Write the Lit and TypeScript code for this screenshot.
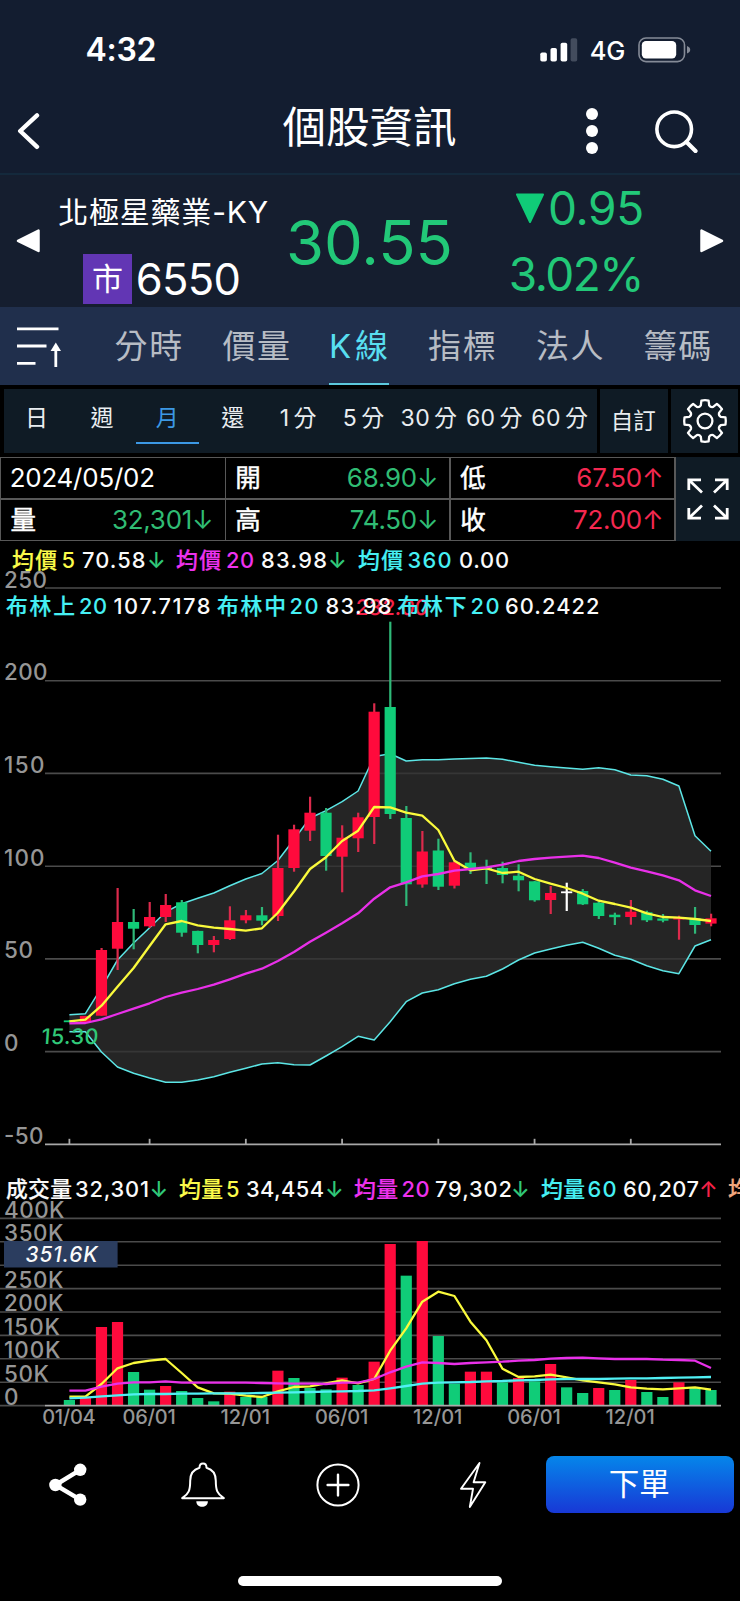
import { LitElement, html, svg, css } from "lit";
import { customElement } from "lit/decorators.js";

const PITCH = 16.04;
const FIRST_X = 69.4;
const cx = (i: number) => FIRST_X + i * PITCH;

/** direction, body top, body bottom, wick top, wick bottom */
type Candle = ["r" | "g" | "w", number, number, number, number];

const CANDLES: Candle[] = [
  ["g", 1020.4, 1022.2, 1020.4, 1022.2], ["r", 1016, 1022, 1016, 1022], ["r", 950, 1015.7, 948, 1015.7],
  ["r", 922, 948.7, 888, 970], ["g", 922, 928.7, 909, 949.3], ["r", 917, 926.3, 902, 928],
  ["r", 905, 917, 894, 922], ["g", 902.3, 932.7, 900, 936.7], ["g", 930.9, 945, 930.7, 953.3],
  ["r", 940, 945, 936, 952.3], ["r", 920.3, 939, 906.3, 940], ["r", 915.3, 920.3, 910, 923.3],
  ["g", 915.3, 920.7, 907, 925.3], ["r", 868, 916, 834.7, 921], ["r", 829.3, 868, 824.7, 871.7],
  ["r", 812.7, 830.7, 796.7, 841], ["g", 812.7, 856, 808, 870.7], ["r", 837.7, 856.7, 825.3, 892.3],
  ["r", 817.3, 838.3, 812.7, 852], ["r", 711.7, 817, 703.3, 844], ["g", 707, 814, 621.7, 819],
  ["g", 818, 884.3, 806, 906], ["r", 851.5, 884.5, 831, 887.7], ["g", 850.5, 886.7, 838.7, 890],
  ["r", 862.3, 885.7, 861, 888.5], ["g", 862.7, 868, 852.3, 874], ["g", 867, 869.4, 859.7, 884],
  ["g", 868, 875, 861.7, 883.3], ["g", 875.7, 880.3, 864.3, 891.3], ["g", 881.3, 900.3, 881, 901.7],
  ["r", 893, 900, 886, 914], ["w", 891.4, 893.2, 882.7, 911], ["g", 891, 904.3, 889, 905],
  ["g", 902.7, 916, 901.3, 919], ["g", 914.7, 917.2, 912.7, 925], ["r", 911.7, 917, 900, 924.7],
  ["g", 912.3, 920.3, 910.7, 922], ["g", 918.5, 920.7, 914, 922.3], ["r", 917, 919.5, 915.7, 939.7],
  ["g", 918.3, 925, 907, 933.7], ["r", 918.3, 923.6, 913.7, 926.3],
];

const BAND_TOP = [1014.7, 1013.7, 987.7, 960, 943, 927.7, 912, 903.7, 898.3, 893, 885.7, 879, 873.5, 860.5, 839.5, 818,
  810.7, 801.7, 791, 756.5, 753.7, 761, 759.7, 759.7, 759, 758.5, 758, 759.3, 762.3, 765.3, 766.7, 768, 769.3, 767.7,
  769.7, 775, 775.7, 779.3, 786, 835.7, 851.3];
const BAND_LOW = [1031.7, 1031.7, 1052, 1067, 1073.3, 1078, 1082.3, 1082.3, 1080, 1076.7, 1072.3, 1068.3, 1064, 1062.7,
  1064.7, 1065, 1056, 1046.7, 1036.3, 1040, 1021.7, 1001.7, 993, 989.7, 983.7, 979.3, 976.3, 969, 960, 953, 949, 945.3,
  942.3, 948.3, 955.3, 959.3, 965.7, 970.7, 973.7, 946, 939.7];
const MA5 = [1021.3, 1019.7, 1005.7, 986.7, 968, 946, 924.3, 921, 925.3, 927.7, 929, 930.7, 928.3, 912.7, 891.5, 869,
  857.3, 841, 830.7, 807, 807.3, 812.7, 815.7, 830, 860.7, 870.3, 868.3, 873, 871.7, 879, 883.7, 888, 893.7, 900.7,
  904, 907.7, 913.3, 917, 917.7, 919, 921];
const MA20 = [1023.3, 1023, 1019.3, 1014, 1008.7, 1003.3, 997, 992.7, 989, 984.7, 979.3, 973.7, 968.7, 961, 952, 941.7,
  932.7, 923.3, 913.3, 898.7, 887.3, 882.3, 876.3, 874, 870.7, 869, 867.3, 864.7, 861, 859, 857.7, 856.7, 855.7, 858,
  862.7, 867.7, 871.3, 875.3, 880.3, 890.3, 896];

/** Volume pane values are thirds of a pixel below y = 1160. */
const vy = (v: number) => 1160 + v / 3;
const VOLUMES = [720, 712, 501, 486, 636, 689, 678, 693, 714, 724, 695, 711, 711, 632, 654, 684, 688, 653, 675, 605, 252,
  347, 243, 528, 671, 635, 635, 667, 654, 664, 612, 682, 699, 684, 690, 660, 696, 711, 667, 683, 690];
const VOLUME_DIR = "grrrggrgggrggrgggrgrrgrggrrgrgrggrgrggrgg";
const VMA5 = [710, 710, 672, 625, 609, 602, 597, 639, 682, 700, 701, 707, 711, 694, 681, 679, 670, 661, 670, 657, 572,
  505, 425, 395, 408, 485, 541, 626, 651, 649, 644, 652, 661, 667, 673, 682, 686, 688, 685, 682, 689];
const VMA20 = [692, 692, 680, 671, 667, 667, 664, 668, 668, 668, 668, 668, 669, 670, 671, 671, 672, 668, 668, 657, 637,
  620, 607, 609, 612, 609, 607, 605, 602, 600, 596, 594, 593, 595, 597, 597, 597, 599, 600, 602, 624];
const VMA60 = [715, 713, 709, 706, 703, 702, 702, 701, 701, 700, 700, 700, 699, 698, 697, 696, 695, 694, 693, 691, 685,
  678, 671, 668, 667, 666, 664, 663, 661, 660, 658, 657, 657, 657, 656, 655, 655, 654, 653, 652, 651];

const points = (ys: number[]) => ys.map((y, i) => `${cx(i).toFixed(1)},${y.toFixed(1)}`).join(" ");

/** x, width, text, colour class */
type Run = [number, number, string, string];

const PRICE_LEGEND: Run[] = [
  [12, 45, "均價", "yellow"], [61.5, 14, "5", "yellow"], [82, 63.5, "70.58", "white"], [147, 17, "↓", "green"],
  [176, 45, "均價", "magenta"], [226, 28, "20", "magenta"], [261, 66, "83.98", "white"], [328, 17, "↓", "green"],
  [358, 45, "均價", "cyan"], [407.5, 44, "360", "cyan"], [459, 50, "0.00", "white"],
];
const BAND_LEGEND: Run[] = [
  [6, 69, "布林上", "cyan"], [79, 28, "20", "cyan"], [113.5, 97, "107.7178", "white"],
  [217, 69, "布林中", "cyan"], [289.5, 29, "20", "cyan"], [325.5, 66, "83.98", "white"],
  [397.5, 69, "布林下", "cyan"], [470.5, 29, "20", "cyan"], [505, 94.5, "60.2422", "white"],
];
const VOLUME_LEGEND: Run[] = [
  [6, 66, "成交量", "white"], [75, 74, "32,301", "white"], [149.5, 17, "↓", "green"],
  [179, 44, "均量", "yellow"], [226, 14, "5", "yellow"], [246, 78, "34,454", "white"], [325, 17, "↓", "green"],
  [354, 44, "均量", "magenta"], [401.5, 28, "20", "magenta"], [435, 77, "79,302", "white"], [511, 17, "↓", "green"],
  [541, 44, "均量", "cyan"], [587.5, 29, "60", "cyan"], [623, 76, "60,207", "white"], [699, 17, "↑", "red"],
  [728, 44, "均量", "orange"],
];

const isHan = (text: string) => /[\u4e00-\u9fff]/.test(text);

const runs = (list: Run[], y: number) =>
  list.map(([x, w, text, tone]) => svg`
    <text class="legend ${tone} ${isHan(text) ? "han" : ""}" x=${x} y=${y} textLength=${w}>${text}</text>`);

@customElement("stock-chart")
export class StockChart extends LitElement {
  static styles = css`
    :host { display: block; }
    svg { display: block; }
    text { font-family: Inter, "Noto Sans CJK TC", sans-serif; }
    .legend { font-size: 21.8px; font-weight: 500; }
    .han { stroke-width: 0.2; }
    .han.yellow { stroke: #fbfb4a; }
    .han.magenta { stroke: #ee32ee; }
    .han.cyan { stroke: #46f0f4; }
    .han.white { stroke: #fafafa; }
    .han.orange { stroke: #f2a67c; }
    .axis { font-size: 22.4px; font-weight: 500; fill: #969696; }
    .date { font-size: 20px; font-weight: 500; fill: #969696; }
    .mark { font-size: 21.5px; font-weight: 500; }
    .tag { font-size: 20.8px; font-weight: 550; font-style: italic; }
    .tag-box { fill: #2b3d5f; }
    .yellow { fill: #fbfb4a; }
    .magenta { fill: #ee32ee; }
    .cyan { fill: #46f0f4; }
    .green { fill: #30c878; }
    .red { fill: #f62248; }
    .white { fill: #fafafa; }
    .orange { fill: #f2a67c; }
    .grid { stroke: #4b4b4b; stroke-width: 1.6; }
    .base { stroke: #a8a8a8; stroke-width: 1.8; }
    .band { fill: #303030; fill-opacity: 0.77; }
    .line { fill: none; stroke-width: 2.3; stroke-linejoin: round; }
    .line.l-band { stroke: #5ce6e6; stroke-width: 1.5; }
    .l-yellow { stroke: #fafa3c; }
    .l-magenta { stroke: #e930e9; }
    .l-cyan { stroke: #50f0f4; }
    .c-r { fill: #ff0a3c; }
    .c-g { fill: #10cc78; }
    .c-w { fill: #ffffff; }
    .k-r { fill: #dc2a4c; }
    .k-g { fill: #2fb878; }
    .k-w { fill: #ffffff; }
  `;

  private label(w: number, y: number, text: string) {
    return svg`<text class="axis" x="4" y=${y} textLength=${w}>${text}</text>`;
  }

  render() {
    const priceGrid = [588, 680.8, 773.4, 866.2, 958.9, 1051.6];
    const volumeGrid = [0, 1, 2, 3, 4, 5, 6, 7].map((i) => 1218.4 + i * 23.4);
    const ticks = [0, 5, 11, 17, 23, 29, 35];
    const dates = ["01/04", "06/01", "12/01", "06/01", "12/01", "06/01", "12/01"];
    const band = `${points(BAND_TOP)} ${points(BAND_LOW).split(" ").reverse().join(" ")}`;
    return html`
      <svg width="740" height="895" viewBox="0 541 740 895">
        ${runs(PRICE_LEGEND, 567.6)}
        ${priceGrid.map((y) => svg`<line class="grid" x1="45" x2="721" y1=${y} y2=${y} />`)}
        <text class="mark red" transform="translate(355 615) skewX(-4)" textLength="73">232.00</text>
        <polygon class="band" points=${band} />
        <polyline class="line l-band" points=${points(BAND_TOP)} />
        <polyline class="line l-band" points=${points(BAND_LOW)} />
        ${CANDLES.map(([c, top, bottom, high, low], i) => svg`
          <rect class="k-${c}" x=${cx(i) - 1} width="2.2" y=${high} height=${low - high} />
          <rect class="c-${c}" x=${cx(i) - 5.6} width="11.2" y=${top} height=${bottom - top} />`)}
        <polyline class="line l-yellow" points=${points(MA5)} />
        <polyline class="line l-magenta" points=${points(MA20)} />
        <line class="base" x1="45" x2="721" y1="1144.4" y2="1144.4" />
        ${ticks.map((i) => svg`<line class="base" x1=${cx(i)} x2=${cx(i)} y1="1138.8" y2="1144.4" />`)}
        ${this.label(43, 587.5, "250")}
        ${this.label(43.5, 679.8, "200")}
        ${this.label(40.5, 772.8, "150")}
        ${this.label(40.5, 865.8, "100")}
        ${this.label(29, 958, "50")}
        ${this.label(14.5, 1051, "0")}
        ${this.label(39.5, 1143.6, "-50")}
        <text class="mark green" transform="translate(41 1043.6) skewX(-4)" textLength="57">15.30</text>
        ${runs(BAND_LEGEND, 614.4)}

        ${volumeGrid.map((y) => svg`<line class="grid" x1="0" x2="721" y1=${y} y2=${y} />`)}
        <line class="grid" x1="0" x2="45" y1="1405.6" y2="1405.6" />
        ${VOLUMES.map((v, i) => svg`
          <rect class="c-${VOLUME_DIR[i]}" x=${cx(i) - 5.6} width="11.2" y=${vy(v)} height=${1405.6 - vy(v)} />`)}
        <line class="base" x1="45" x2="721" y1="1405.6" y2="1405.6" />
        <polyline class="line l-yellow" points=${points(VMA5.map(vy))} />
        <polyline class="line l-magenta" points=${points(VMA20.map(vy))} />
        <polyline class="line l-cyan" points=${points(VMA60.map(vy))} />
        ${this.label(60.5, 1217.8, "400K")}
        ${this.label(59.5, 1241, "350K")}
        ${this.label(59.5, 1288, "250K")}
        ${this.label(59.5, 1311.4, "200K")}
        ${this.label(56, 1334.8, "150K")}
        ${this.label(56.5, 1358.2, "100K")}
        ${this.label(45, 1381.6, "50K")}
        ${this.label(14.5, 1405, "0")}
        <rect class="tag-box" x="4" y="1241" width="113.6" height="26.5" />
        <text class="tag white" x="25.5" y="1261.5" textLength="72">351.6K</text>
        ${runs(VOLUME_LEGEND, 1197.2)}
        ${ticks.map((t, i) => svg`
          <text class="date" x=${cx(t) - (dates[i][0] === "1" ? 25.4 : 27.2)} y="1424.3"
            textLength=${dates[i][0] === "1" ? 49.5 : 53.5}>${dates[i]}</text>`)}
      </svg>
    `;
  }
}

@customElement("app-root")
export class AppRoot extends LitElement {
  static styles = css`
    :host {
      display: flex; flex-direction: column; width: 740px; height: 1601px; overflow: hidden;
      background: #000; color: #fff; font-family: Inter, "Noto Sans CJK TC", sans-serif;
    }
    * { box-sizing: border-box; }
    svg { display: block; flex: none; }
    .status { height: 84px; background: #131d30; display: flex; align-items: center; padding: 15px 49px 0 85.5px; }
    .clock { font-size: 32px; font-weight: 600; line-height: 40px; flex: 1; letter-spacing: -0.3px; }
    .net { font-size: 25.5px; font-weight: 450; line-height: 40px; margin: 2px 13px 0 11.5px; letter-spacing: -0.3px; }
    .title { height: 91px; background: #131d30; border-bottom: 2px solid #14293c; display: flex; align-items: center;
      padding: 5px 41px 0 16px; }
    .title h1 { flex: 1; margin: 0 0 8px; padding-left: 113px; text-align: center; font-size: 43.5px;
      font-weight: 400; line-height: 60px; }
    .search { margin-left: 57px; }
    .quote { height: 132px; background: #151e2f; display: flex; align-items: center; padding: 0 16px; }
    .ident { width: 245px; height: 132px; display: flex; flex-direction: column; align-items: center; }
    .name { font-size: 30px; font-weight: 400; line-height: 40px; margin-top: 17px; letter-spacing: 0.8px;
      padding-left: 2px; white-space: nowrap; }
    .code { display: flex; align-items: center; margin-top: 22px; font-size: 43.5px; line-height: 50px;
      letter-spacing: -0.7px; margin-right: 2px; }
    .badge { width: 49px; height: 50px; background: #6236b4; font-size: 31px; font-weight: 400; text-align: center;
      margin-right: 4px; }
    .price { width: 171px; font-size: 61.5px; line-height: 70px; text-align: center; color: #22c878;
      letter-spacing: 0; white-space: nowrap; margin: 3px 1px 0 -1px; font-weight: 380; }
    .delta { width: 188px; display: flex; flex-direction: column; align-items: flex-end; font-size: 46px;
      font-weight: 380; line-height: 50px; gap: 16px; color: #22c878; letter-spacing: -0.3px; }
    .delta div { display: flex; align-items: center; gap: 3px; }
    .delta .percent { letter-spacing: -1.5px; padding-right: 1px; }
    .next { margin-left: auto; }
    .tabs { height: 78px; background: #202f4c; display: flex; padding-left: 17px; }
    .tabs svg { margin-top: 19px; }
    .tab { font-size: 33px; line-height: 79px; font-weight: 400; color: #b7bcc4; letter-spacing: 1.6px;
      margin-left: 38.6px; height: 78px; white-space: nowrap; }
    .tab.first { margin-left: 52.6px; }
    .tab.on { color: #58def0; border-bottom: 2.5px solid #5cc8dc; display: flex; gap: 2px; margin-left: 37.5px; }
    .periods { height: 72px; display: flex; gap: 3px; padding: 4px 2px 4.5px 4px; }
    .panel { background: #0f1b25; }
    .list { width: 593px; display: grid; grid-template-columns: repeat(9, 65.4px); }
    .period { display: flex; flex-direction: column; align-items: center; font-size: 23px; line-height: 30px;
      padding-top: 14px; color: #e9edf0; white-space: nowrap; letter-spacing: 0.4px; }
    .period span { display: flex; gap: 4px; }
    .period.on { color: #3c98e4; }
    .period.on::after { content: ""; width: 63px; height: 2.5px; margin-top: 8.5px; background: #3c98e4; }
    .custom { width: 68px; font-size: 22.5px; line-height: 64px; text-align: center; color: #e9edf0;
      padding-right: 1.5px; }
    .gear { flex: 1; display: flex; align-items: center; justify-content: center; }
    .facts { height: 84px; display: flex; }
    .table { width: 675.5px; display: grid; grid-template-columns: repeat(3, 1fr); gap: 1.6px; padding: 1.2px;
      background: #585858; }
    .cell { background: #000; display: flex; justify-content: space-between; align-items: center;
      padding: 0 11px 0 8.5px; font-size: 25.9px; font-weight: 380; line-height: 40px; white-space: nowrap;
      letter-spacing: -0.2px; }
    .cell b { font-size: 25.5px; font-weight: 400; letter-spacing: 0; margin-left: 0.7px;
      -webkit-text-stroke: 0.5px #fff; }
    .up { color: #f42850; }
    .down { color: #30bc74; }
    .expand { flex: 1; display: flex; align-items: center; justify-content: center; }
    .actions { height: 98px; display: flex; align-items: center; padding: 0 6.5px 1px 48px; }
    .bell { margin-left: 93px; }
    .plus { margin-left: 90px; }
    .bolt { margin-left: 98px; }
    .order { margin-left: auto; width: 187.5px; height: 57px; border-radius: 8px; font-size: 30.5px; line-height: 56px;
      font-weight: 400; text-align: center; background: linear-gradient(#0586ea, #1838d6); padding-right: 1px; }
    .home { width: 264px; height: 10px; border-radius: 5px; background: #fff; margin: 42px auto 0; }
  `;

  private periods = [["日"], ["週"], ["月"], ["還"], ["1", "分"], ["5", "分"], ["30", "分"], ["60", "分"], ["60", "分"]];
  private facts: [string, string, string][] = [
    ["2024/05/02", "", ""], ["開", "68.90↓", "down"], ["低", "67.50↑", "up"],
    ["量", "32,301↓", "down"], ["高", "74.50↓", "down"], ["收", "72.00↑", "up"],
  ];

  private gearPath() {
    const pt = (r: number, deg: number) => {
      const a = (deg * Math.PI) / 180;
      return `${(23 + r * Math.cos(a)).toFixed(2)} ${(23 + r * Math.sin(a)).toFixed(2)}`;
    };
    const parts: string[] = [];
    for (let k = 0; k < 8; k++) {
      const a = k * 45 - 90;
      parts.push(`${k ? "L" : "M"}${pt(16.2, a - 15)} L${pt(20.8, a - 10)} A20.8 20.8 0 0 1 ${pt(20.8, a + 10)}
        L${pt(16.2, a + 15)} Q${pt(14.6, a + 22.5)} ${pt(16.2, a + 30)}`);
    }
    return parts.join(" ") + "Z";
  }

  render() {
    return html`
      <div class="status">
        <span class="clock">4:32</span>
        <svg width="38" height="24" viewBox="541 37.5 38 24" fill="#fff">
          <rect x="541.3" y="52" width="6.6" height="9" rx="1.8" />
          <rect x="551.5" y="47.5" width="6.4" height="13.5" rx="1.8" />
          <rect x="561.6" y="42.3" width="6.6" height="18.7" rx="1.8" />
          <rect x="571.6" y="37.8" width="6.6" height="23.2" rx="1.8" fill="#434c5d" />
        </svg>
        <span class="net">4G</span>
        <svg width="53" height="26" viewBox="638 36.5 53 26">
          <rect x="639" y="37.5" width="45.5" height="23.6" rx="7" fill="none" stroke="#858b97" stroke-width="1.6" />
          <rect x="641.8" y="40.6" width="34.4" height="17.4" rx="4.2" fill="#fff" />
          <path d="M687 45.5q3.2 1.3 3.2 3.8t-3.2 3.8z" fill="#858b97" />
        </svg>
      </div>
      <div class="title">
        <svg width="24" height="38" viewBox="16 112 24 38">
          <path d="M37 115.4L20.2 131L37 146.8" fill="none" stroke="#fff" stroke-width="4.4" stroke-linecap="round"
            stroke-linejoin="round" />
        </svg>
        <h1>個股資訊</h1>
        <svg width="12" height="46" viewBox="0 0 12 46" fill="#fff">
          <circle cx="6" cy="6" r="6" /><circle cx="6" cy="23" r="6" /><circle cx="6" cy="40" r="6" />
        </svg>
        <svg class="search" width="44" height="44" viewBox="655 109.5 44 44" fill="none" stroke="#fff">
          <circle cx="674.2" cy="129.8" r="17.3" stroke-width="3.6" />
          <path d="M686.5 142.5L695.5 151.6" stroke-width="4.2" stroke-linecap="round" />
        </svg>
      </div>
      <div class="quote">
        <svg width="24" height="26" viewBox="0 0 24 26">
          <path d="M22.5 2.5v20.5L2 12.8z" fill="#fff" stroke="#fff" stroke-width="2.5" stroke-linejoin="round" />
        </svg>
        <div class="ident">
          <div class="name">北極星藥業-KY</div>
          <div class="code"><span class="badge">市</span>6550</div>
        </div>
        <div class="price">30.55</div>
        <div class="delta">
          <div>
            <svg width="30" height="31" viewBox="0 0 30 31">
              <path d="M2 1.5h26L15 29z" fill="#10cc78" stroke="#10cc78" stroke-width="2" stroke-linejoin="round" />
            </svg>0.95
          </div>
          <div class="percent">3.02%</div>
        </div>
        <svg class="next" width="24" height="26" viewBox="0 0 24 26">
          <path d="M1.5 2.5v20.5L22 12.8z" fill="#fff" stroke="#fff" stroke-width="2.5" stroke-linejoin="round" />
        </svg>
      </div>
      <div class="tabs">
        <svg width="45" height="44" viewBox="17 326 45 44" stroke="#fff" stroke-width="2.8" fill="#fff">
          <path d="M17 328.8H58.5M17 346H46.5M17 363.4H35.5M55.8 350V367" />
          <path d="M55.8 342.4L61 351H50.6z" stroke="none" />
        </svg>
        <div class="tab first">分時</div>
        <div class="tab">價量</div>
        <div class="tab on"><span>K</span><span>線</span></div>
        <div class="tab">指標</div>
        <div class="tab">法人</div>
        <div class="tab">籌碼</div>
      </div>
      <div class="periods">
        <div class="panel list">
          ${this.periods.map((p, i) => html`
            <div class="period ${i === 2 ? "on" : ""}"><span>${p.map((s) => html`<span>${s}</span>`)}</span></div>`)}
        </div>
        <div class="panel custom">自訂</div>
        <div class="panel gear">
          <svg width="46" height="46" viewBox="0 0 46 46" fill="none" stroke="#fff" stroke-width="2.3"
            stroke-linejoin="round">
            <path d=${this.gearPath()} /><circle cx="23" cy="23" r="7.4" />
          </svg>
        </div>
      </div>
      <div class="facts">
        <div class="table">
          ${this.facts.map(([k, v, tone]) => html`
            <div class="cell">${v ? html`<b>${k}</b><span class=${tone}>${v}</span>` : html`<span>${k}</span>`}</div>`)}
        </div>
        <div class="panel expand">
          <svg width="42" height="42" viewBox="0 0 42 42" fill="none" stroke="#fff" stroke-width="2.8">
            <path d="M1.8 12V1.8H14M2 2L15 14.5M28 1.8H40.2V12M40 2L27 14.5M1.8 30V40.2H14M2 40L15 27.5M28 40.2H40.2V30
              M40 40L27 27.5" />
          </svg>
        </div>
      </div>
      <stock-chart></stock-chart>
      <div class="actions">
        <svg width="40" height="44" viewBox="48 1463 40 44" stroke="#fff" stroke-width="4.4" fill="#fff">
          <path d="M80.2 1469.8L55.4 1485L80.2 1499.6" fill="none" />
          <circle cx="80.2" cy="1469.8" r="6.2" stroke="none" /><circle cx="55.4" cy="1485" r="6.2" stroke="none" />
          <circle cx="80.2" cy="1499.6" r="6.2" stroke="none" />
        </svg>
        <svg class="bell" width="44" height="46" viewBox="181.5 1461.5 44 46">
          <path d="M200 1467.2c0-5.6 7-5.6 7 0c6.5 1.8 9.3 6.8 9.3 13c0 9.5 1.3 13 8 17.5H182.7
            c6.7-4.5 8-8 8-17.5c0-6.2 2.8-11.2 9.3-13z" fill="none" stroke="#fff" stroke-width="2"
            stroke-linejoin="round" />
          <path d="M196.8 1500.8h11.6c0 7.4-11.6 7.4-11.6 0z" fill="#fff" />
        </svg>
        <svg class="plus" width="46" height="46" viewBox="315 1461.7 46 46" fill="none" stroke="#fff">
          <circle cx="338" cy="1484.7" r="20.6" stroke-width="2" />
          <path d="M338 1474.3V1495.1M327.6 1484.7H348.4" stroke-width="2.4" stroke-linecap="round" />
        </svg>
        <svg class="bolt" width="28" height="48" viewBox="459 1460 28 48" fill="none" stroke="#fff" stroke-width="1.9"
          stroke-linejoin="round">
          <path d="M479.5 1462L461 1487.8H473L469.8 1506L485.3 1481.2H473.6z" />
        </svg>
        <div class="order">下單</div>
      </div>
      <div class="home"></div>
    `;
  }
}
